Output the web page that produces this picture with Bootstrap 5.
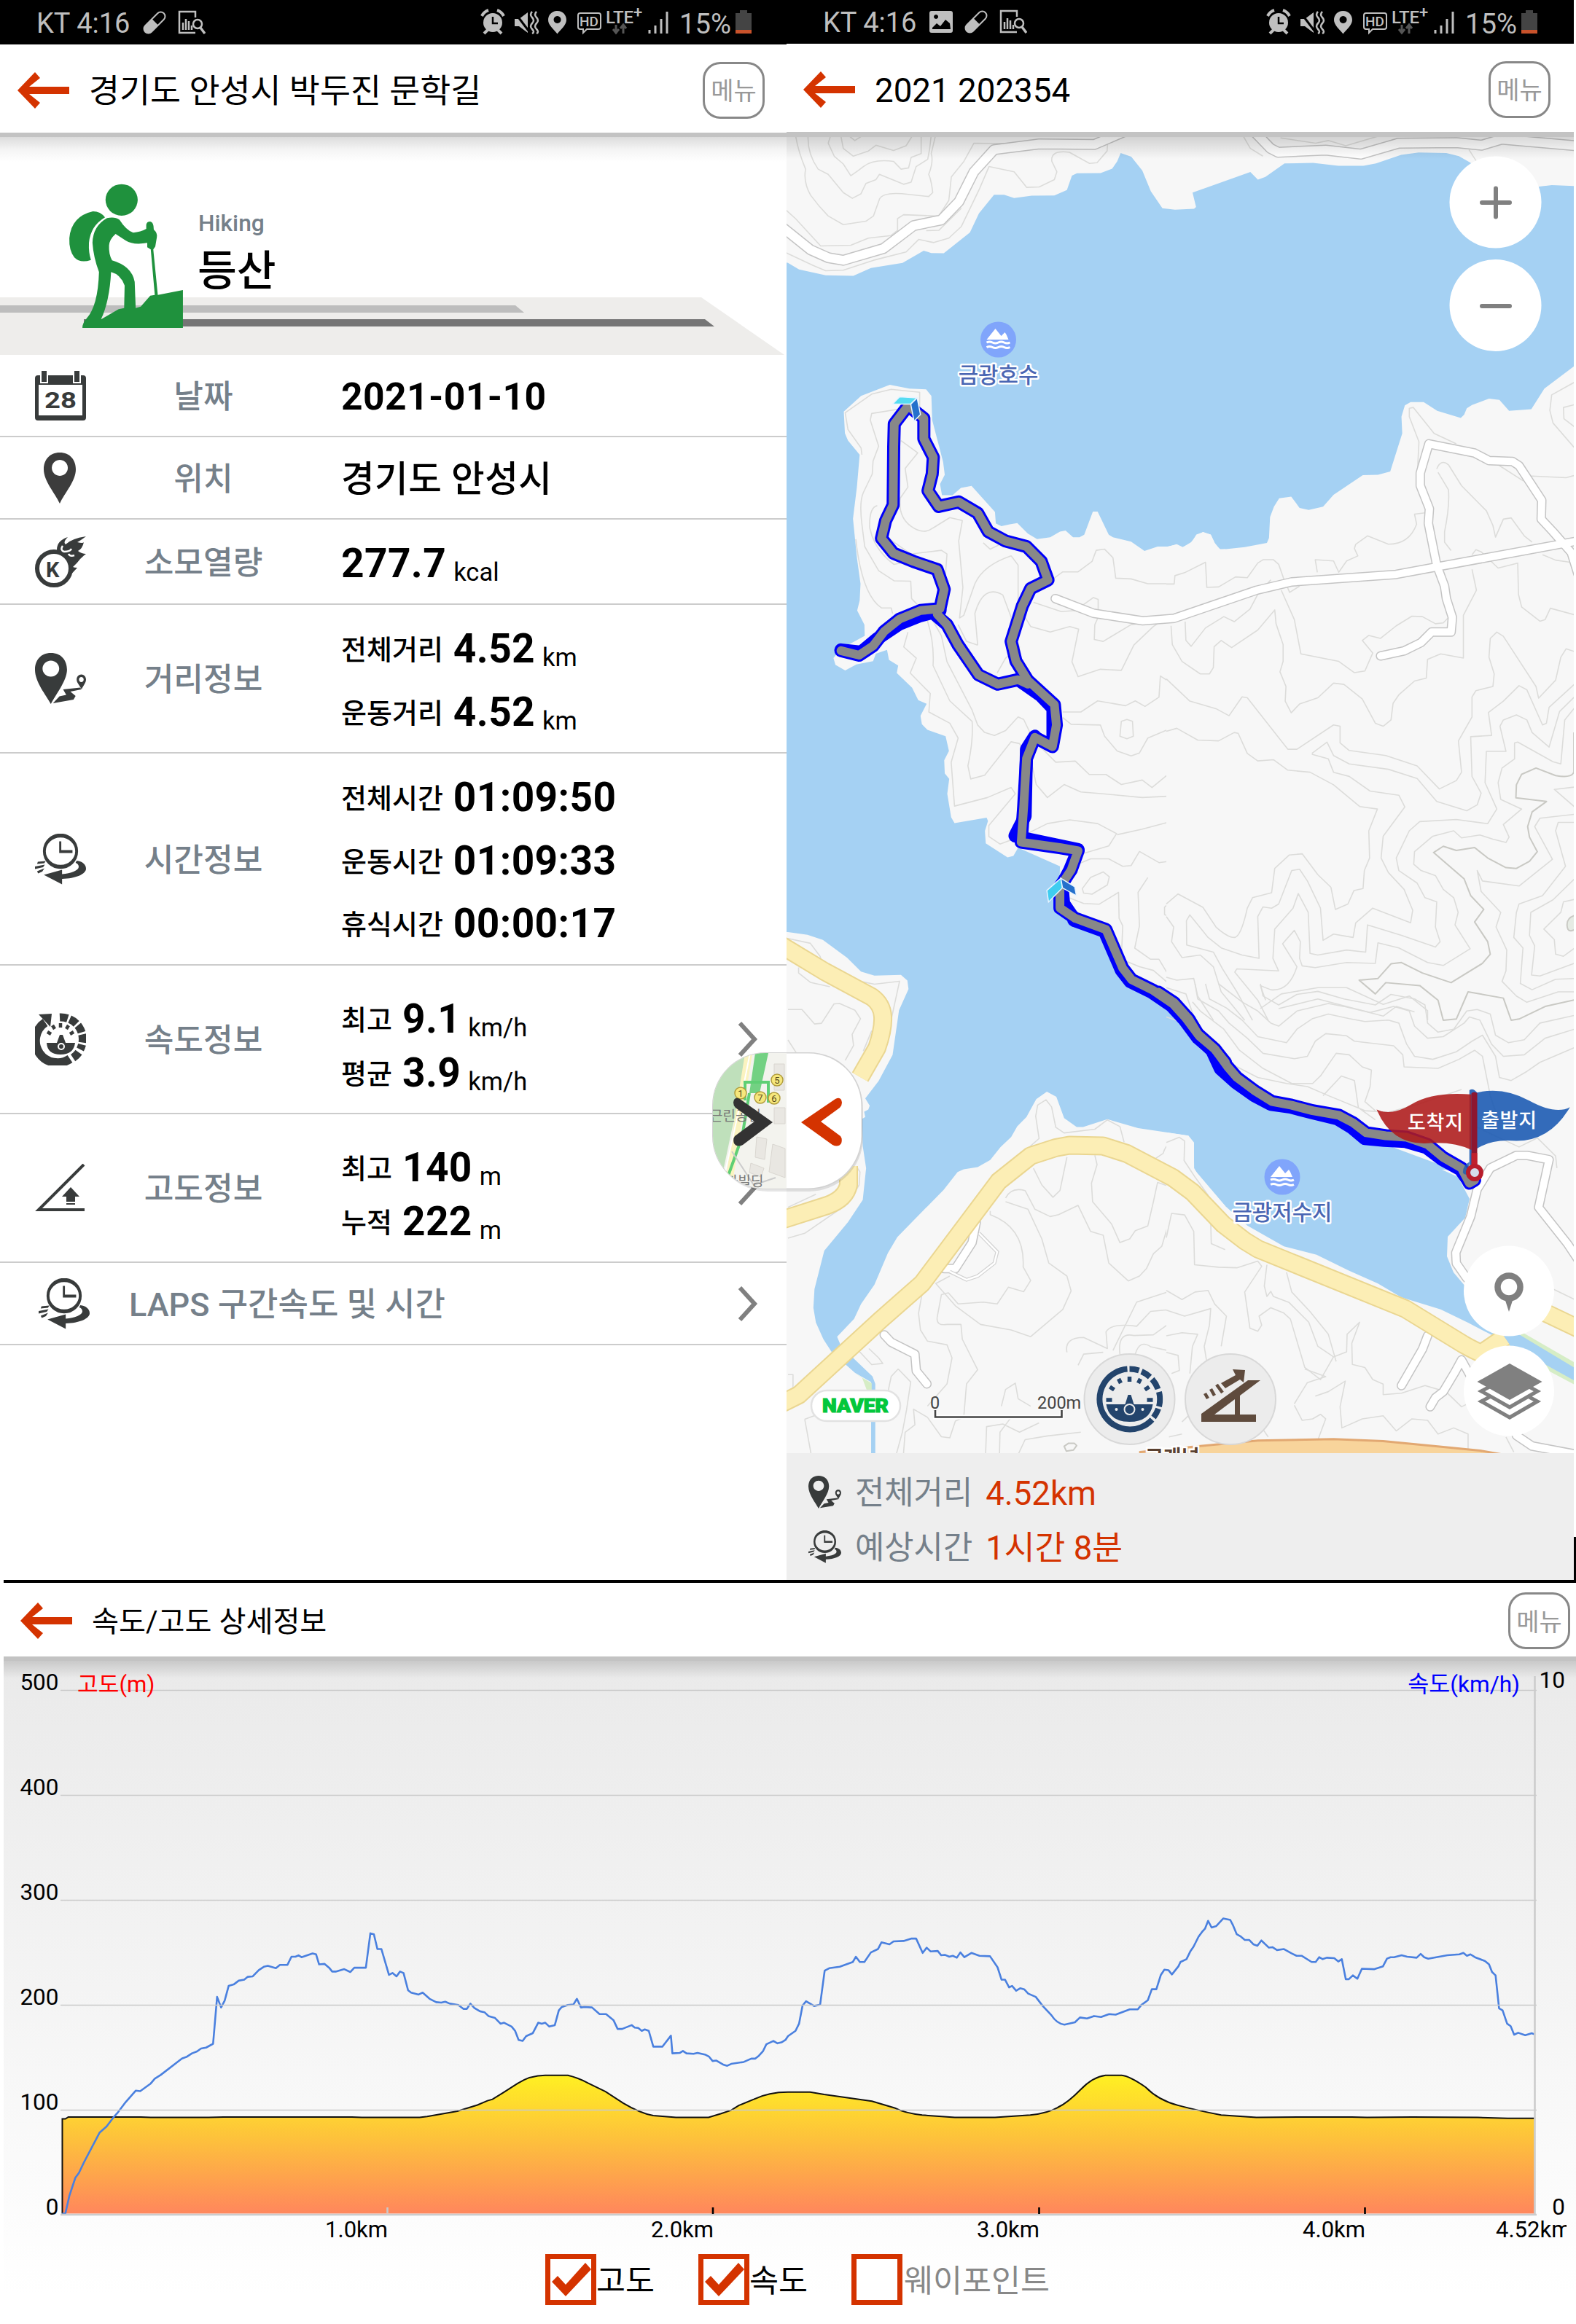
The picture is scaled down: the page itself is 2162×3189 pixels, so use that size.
<!DOCTYPE html>
<html lang="ko">
<head>
    <meta charset="UTF-8">
    <title>등산 기록</title>
    <link href="https://cdn.jsdelivr.net/npm/bootstrap@5.3.3/dist/css/bootstrap.min.css" rel="stylesheet">
    <style>
        body { width: 2162px; background: #fff; color: #000; font-family: Roboto, "Noto Sans CJK KR", sans-serif; overflow-x: hidden; }
        svg { display: block; flex: none; }
        .screens { height: 2168px; }
        .screen { width: 1079px; height: 2168px; overflow: hidden; }
        .screen-map { width: 1080px; }
        .statusbar { height: 61px; background: #000; color: #bfbfbf; font-size: 38px; padding-left: 50px; }
        .statusbar span { padding-top: 3px; }
        .topbar { height: 121px; padding: 4px 30px 0 24px; font-size: 45.7px; }
        .topbar .title-text { margin-left: 27px; line-height: 60px; padding-top: 4px; }
        .btn-menu { width: 85px; height: 78px; border: 3px solid #888; border-radius: 24px; color: #999; font-size: 34px; padding: 3px 0 0; line-height: 1; background: #fff; }
        .bar-line { height: 6px; background: #c3c3c3; }
        .bar-shadow { height: 34px; background: linear-gradient(#dcdcdc, #f4f4f4 50%, #fff); }
        .hero { height: 265px; }
        .item { border-bottom: 2px solid #ccc; }
        .item-icon { width: 70px; margin-left: 48px; }
        .item-label { width: 322px; padding-top: 5px; text-align: center; font-size: 44.2px; font-weight: 500; color: #75808a; }
        .item-value { margin-left: 28px; padding-top: 5px; font-size: 55px; font-weight: 700; letter-spacing: .4px; }
        .item-value .line { display: flex; align-items: baseline; }
        .h113 { height: 113px; } .h117 { height: 117px; } .h204 { height: 204px; } .h291 { height: 291px; }
        .lh87 .line { height: 86.5px; line-height: 86.5px; }
        .lh73 { padding-top: 17px; }
        .lh73 .line { height: 74px; line-height: 74px; }
        .sub { font-size: 38px; font-weight: 500; letter-spacing: 0; margin-right: 14px; transform: translateY(-4px); }
        .unit { font-size: 34.5px; font-weight: 400; letter-spacing: 0; margin-left: 10px; transform: translateY(5px); }
        .chev { margin-left: auto; margin-right: 38px; }
        .handle { position: absolute; left: 975px; top: 1438px; z-index: 5; }
        .infobar { height: 174px; background: #eee; padding: 16px 0 0 30px; font-size: 45.5px; }
        .infobar .inforow { height: 75px; }
        .infobar span { padding-top: 5px; }
        .infobar .name { color: #75808a; font-size: 43.8px; margin-left: 19px; margin-right: 18px; }
        .orange { color: #d43300; }
        .detail { height: 1021px; margin-left: 5px; border-top: 4px solid #000; position: relative; }
        .detail .topbar { height: 101px; padding: 3px 8px 0 23px; font-size: 40.2px; }
        .chart-area { height: 916px; background: linear-gradient(#eaeaea, #f3f3f3 45%, #fff 95%); }
        .chart-shadow { height: 24px; background: linear-gradient(#c9c9c9, rgba(232,232,232,0)); margin-bottom: -24px; }
        .legend { margin-top: -36px; padding-left: 743px; font-size: 43.5px; line-height: 70px; }
        .legend span { padding-top: 3px; }
        .edge { position: absolute; right: 0; top: 2109px; width: 3px; height: 60px; background: #000; }
        .ns path, .ns polyline, .ns polygon { vector-effect: non-scaling-stroke; }
        .land { fill: #f7f7f7; }
        .contour { fill: none; stroke: #dcdcda; stroke-width: 1.6; stroke-linejoin: round; }
        .contour .bold { stroke: #c9c9c4; stroke-width: 2; }
        .rc { fill: none; stroke: #c4c4c4; stroke-width: 13; stroke-linejoin: round; stroke-linecap: round; }
        .rf { fill: none; stroke: #fff; stroke-width: 10; stroke-linejoin: round; stroke-linecap: round; }
        .yc { fill: none; stroke: #ead691; stroke-width: 26; stroke-linejoin: round; }
        .yf { fill: none; stroke: #fceeb5; stroke-width: 22; stroke-linejoin: round; }
        .tb { fill: none; stroke: #0000fa; stroke-width: 18; stroke-linejoin: round; stroke-linecap: round; }
        .tg { fill: none; stroke: #888; stroke-width: 12; stroke-linejoin: round; stroke-linecap: round; }
        .maplabel { fill: #4a66b3; stroke: #fff; stroke-width: 5; paint-order: stroke; stroke-linejoin: round; font-size: 29.8px; font-weight: 500; text-anchor: middle; }
    </style>
</head>
<body>

<svg width="0" height="0" style="position:absolute">
    <defs>
        <symbol id="ic-back" viewBox="0 0 71 50" preserveAspectRatio="none">
            <path d="M24 0l7 8-15 12h55v10H16l15 12-7 8L0 25z" fill="#d43300"/>
        </symbol>
        <symbol id="ic-route" viewBox="134 814 196 140" preserveAspectRatio="none">
            <path fill="#383b3b" fill-rule="evenodd" d="M195 814c40 0 62 20 62 46 0 30-45 70-62 94-18-24-61-60-61-94 0-26 22-46 61-46zm0 21c-18 0-32 10-32 22s14 22 32 22 32-10 32-22-14-22-32-22z"/>
            <path fill="#383b3b" d="M203 952l25-19 26-4-12-15 66-5 4 5-42 6 20 12-8 10z"/>
            <path fill="#383b3b" fill-rule="evenodd" d="M312 873c10 0 18 6 18 14 0 9-12 18-17 27-5-9-19-18-19-27 0-8 8-14 18-14zm0 7c-5 0-9 3-9 7s4 7 9 7 9-3 9-7-4-7-9-7z"/>
        </symbol>
        <symbol id="ic-clock" viewBox="134 1300 196 140" preserveAspectRatio="none">
            <g fill="none" stroke="#383b3b">
                <ellipse cx="232" cy="1348" rx="62" ry="43" stroke-width="11"/>
                <path d="M231 1321v28h47" stroke-width="8"/>
            </g>
            <path fill="#383b3b" d="M294 1374c22 2 36 10 36 22 0 15-40 27-92 28v15l-70-26 70-14v12c34-2 64-10 64-20 0-6-5-9-12-11zM145 1377l30-2-5 6-28 2zM134 1390l38-5-7 7-31 5zM142 1403l28-8-8 9-16 5z"/>
        </symbol>
        <symbol id="ic-chev" viewBox="0 0 30 50">
            <path d="M4 3l20 22L4 47" fill="none" stroke="#808080" stroke-width="6"/>
        </symbol>
        <symbol id="ic-gauge" viewBox="0 0 92 92">
            <path d="M43 4.600A41.500 41.500 0 1 0 77 74" fill="none" stroke="currentColor" stroke-width="8"/>
            <path d="M46 4.500A41.500 41.500 0 0 1 59 6.500M62.500 8A41.500 41.500 0 0 1 74 15.500M77 18.500A41.500 41.500 0 0 1 85 32M86.500 36A41.500 41.500 0 0 1 86.500 56M85.500 59A41.500 41.500 0 0 1 79 71" fill="none" stroke="currentColor" stroke-width="8"/>
            <path d="M14 53h26l4-13h4l4 13h26q-4 24-32 24T14 53z" fill="currentColor"/>
            <g stroke="currentColor" stroke-width="5.500">
                <path d="M46 15v7M31 18l3 6M61 18l-3 6M19 29l6 4M73 29l-6 4M14 47h8M70 47h8"/>
            </g>
            <circle cx="46" cy="60" r="7" fill="none" stroke="#ececec" stroke-width="2"/>
            <circle cx="28" cy="60" r="2" fill="#ececec"/><circle cx="64" cy="60" r="2" fill="#ececec"/>
        </symbol>
        <symbol id="ic-lake" viewBox="0 0 50 50">
            <circle cx="25" cy="25" r="24.500" fill="#80a5fb"/>
            <path d="M9 25L21 10l8 10 5-5 2 3 3 7z" fill="#fff"/>
            <path d="M9 29q4-2 8 0t8 0 8 0 8 0M9 35.500q4-2 8 0t8 0 8 0 8 0" fill="none" stroke="#fff" stroke-width="3"/>
        </symbol>
        <symbol id="ic-pill" viewBox="0 0 32 32">
            <g transform="rotate(45 16 16)">
                <rect x="10" y="-2" width="12" height="36" rx="6" fill="none" stroke="#bfbfbf" stroke-width="2"/>
                <path d="M10 15h12v13a6 6 0 0 1-12 0z" fill="#bfbfbf"/>
            </g>
        </symbol>
        <symbol id="ic-doc" viewBox="0 0 38 34">
            <path d="M24 31H2V2h22v8" fill="none" stroke="#bfbfbf" stroke-width="2.500"/>
            <path d="M7 27V17M11 27V12M15 27V15M19 27v-6" stroke="#bfbfbf" stroke-width="2.500"/>
            <circle cx="27" cy="19" r="6" fill="none" stroke="#bfbfbf" stroke-width="2.500"/>
            <path d="M31 24l6 8" stroke="#bfbfbf" stroke-width="3.500"/>
        </symbol>
        <symbol id="ic-photo" viewBox="0 0 32 32">
            <path fill="#bfbfbf" fill-rule="evenodd" d="M3 1h26a3 3 0 0 1 3 3v24a3 3 0 0 1-3 3H3a3 3 0 0 1-3-3V4a3 3 0 0 1 3-3zm1 25h25l-1-8-6-5-7 9-5-4-6 6zM9 6a3 3 0 1 0 .1 0z"/>
        </symbol>
        <!-- right part of the status bar -->
        <symbol id="ic-status" viewBox="655 0 380 61">
            <g fill="none" stroke="#bfbfbf">
                <circle cx="676" cy="31" r="13" fill="#bfbfbf" stroke="none"/>
                <path d="M661 22q3-6 9-8M691 22q-3-6-9-8M664 46l6-6M688 46l-6-6" stroke-width="4"/>
                <path d="M676 23v9h7" stroke="#000" stroke-width="2.500"/>
                <path d="M706 26h6l12-9v28l-12-9h-6z" fill="#bfbfbf" stroke="none"/>
                <path d="M706 17l22 29" stroke="#000" stroke-width="3"/>
                <path d="M730 16q-4 4 0 8t0 8 0 8 0 6M736 16q-4 4 0 8t0 8 0 8 0 6" stroke-width="2.500"/>
                <path d="M764.500 15c8 0 12.500 6 12.500 12.500 0 7-8 13-12.500 19-4.500-6-12.500-12-12.500-19C752 21 756.500 15 764.500 15zm0 7a5 5 0 1 0 .1 0z" fill="#bfbfbf" fill-rule="evenodd" stroke="none"/>
                <path d="M796 18h25q3 0 3 3v16q0 3-3 3h-16l-5 5v-5h-4q-3 0-3-3V21q0-3 3-3z" stroke-width="2"/>
                <path d="M891 46v-5M899 46V35M907 46V26M915 46V16" stroke-width="3"/>
            </g>
            <g fill="#bfbfbf">
                <text x="795" y="36" font-size="19" font-weight="500">HD</text>
                <text x="831" y="32" font-size="24" font-weight="500" textLength="38">LTE</text>
                <text x="869" y="24" font-size="22" font-weight="500">+</text>
                <text x="932" y="46" font-size="38" textLength="71" lengthAdjust="spacingAndGlyphs">15%</text>
            </g>
            <path d="M845 34v10M841 40l4 5 4-5M855 46V35M851 39l4-5 4 5" stroke="#555" stroke-width="3" fill="none"/>
            <path d="M1015 14h10v4h6v28h-22V18h6z" fill="#444"/>
            <path d="M1009 41h22v5h-22z" fill="#c8522b"/>
        </symbol>
    </defs>
</svg>

<div class="screens d-flex position-relative">

    <!-- summary screen -->
    <div class="screen">
        <div class="statusbar d-flex align-items-center">
            <span>KT 4:16</span>
            <svg style="margin-left:18px" width="32" height="32"><use href="#ic-pill"/></svg>
            <svg style="margin-left:16px" width="38" height="34"><use href="#ic-doc"/></svg>
            <svg class="ms-auto" style="margin-right:44px" width="380" height="61"><use href="#ic-status"/></svg>
        </div>
        <div class="topbar d-flex align-items-center">
            <svg width="71" height="50"><use href="#ic-back"/></svg>
            <span class="title-text">경기도 안성시 박두진 문학길</span>
            <button class="btn-menu ms-auto">메뉴</button>
        </div>
        <div class="bar-line"></div>
        <div class="bar-shadow"></div>
        <div class="hero">
            <svg width="1079" height="265" viewBox="0 222 1079 265">
                <path d="M0 408h962l114 79H0z" fill="#eeedeb"/>
                <path d="M0 419h707l12 10H0z" fill="#bdbdbd"/>
                <path d="M115 438h852l13 10H115z" fill="#757575"/>
                <g transform="scale(.6894 .33333)" fill="#1f913d">
                    <ellipse cx="242" cy="823" rx="32" ry="65"/>
                    <path d="M185 870Q200 870 209 895Q180 930 177 1000Q176 1040 181 1070Q160 1085 148 1060Q137 1030 138 980Q142 890 185 870z"/>
                    <path d="M213 898Q228 890 238 905Q250 945 265 958Q280 955 291 942V925Q292 912 299 912Q306 914 306 945Q314 960 312 978L309 1015L305 1027L314 1214L364 1194V1350H164Q164 1330 172 1312Q195 1260 197 1120Q186 1060 184 1000Q185 930 213 898zM230 963Q218 985 217 1010Q216 1045 223 1072Q262 1095 268 1160L270 1268L280 1262L299 1217L308 1214L300 1027L293 1018V1000Q265 1010 250 990zM221 1120Q218 1240 201 1315L236 1273L247 1268L248 1175Q240 1130 221 1120z" fill-rule="evenodd"/>
                </g>
                <text x="272" y="316.500" font-size="31.700" font-weight="500" fill="#75808a">Hiking</text>
                <text x="271" y="391.500" font-size="58.500" font-weight="500">등산</text>
            </svg>
        </div>

        <div class="item h113 d-flex align-items-center">
            <svg class="item-icon" height="70" viewBox="0 0 70 70">
                <path d="M4 7h62q4 0 4 4v54q0 4-4 4H4q-4 0-4-4V11q0-4 4-4zm1 13v42h60V20z" fill="#383b3b" fill-rule="evenodd"/>
                <path d="M8 0h9v17H8zM53 0h9v17h-9z" fill="#383b3b" stroke="#fff" stroke-width="2"/>
                <text x="35" y="52" font-size="31" font-weight="700" text-anchor="middle" textLength="44" lengthAdjust="spacingAndGlyphs" fill="#383b3b">28</text>
            </svg>
            <div class="item-label">날짜</div>
            <div class="item-value" style="font-size:51.600px">2021-01-10</div>
        </div>
        <div class="item h113 d-flex align-items-center">
            <svg class="item-icon" height="70" viewBox="0 0 70 70">
                <path d="M34 0c14 0 22 10 22 23 0 16-15 32-22 47-7-15-22-31-22-47C12 10 20 0 34 0zm0 10a11 11 0 1 0 .1 0z" fill="#3c3c3c" fill-rule="evenodd"/>
            </svg>
            <div class="item-label">위치</div>
            <div class="item-value" style="font-size:49.700px;font-weight:500">경기도 안성시</div>
        </div>
        <div class="item h117 d-flex align-items-center">
            <svg class="item-icon" height="70" viewBox="0 0 70 70">
                <circle cx="26" cy="44" r="23" fill="none" stroke="#383b3b" stroke-width="6"/>
                <path d="M30 18Q30 6 45 1Q38 8 42 11Q50 3 70 0Q62 6 58 8Q66 10 67 8Q65 17 59 20Q64 24 70 24Q62 30 58 36L52 42Q54 43 58 43Q52 50 46 55L48 36Q42 24 32 24z" fill="#383b3b"/>
                <path d="M38 13q-4 6 2 8 8 0 10-4M46 24q2 4 8 2" fill="none" stroke="#fff" stroke-width="2.500"/>
                <text x="15" y="56" font-size="29" font-weight="700" fill="#383b3b">K</text>
            </svg>
            <div class="item-label">소모열량</div>
            <div class="item-value"><div class="line">277.7<span class="unit">kcal</span></div></div>
        </div>
        <div class="item h204 d-flex align-items-center">
            <svg class="item-icon" height="70"><use href="#ic-route"/></svg>
            <div class="item-label">거리정보</div>
            <div class="item-value lh87">
                <div class="line"><span class="sub">전체거리</span>4.52<span class="unit">km</span></div>
                <div class="line"><span class="sub">운동거리</span>4.52<span class="unit">km</span></div>
            </div>
        </div>
        <div class="item h291 d-flex align-items-center">
            <svg class="item-icon" height="70"><use href="#ic-clock"/></svg>
            <div class="item-label">시간정보</div>
            <div class="item-value lh87">
                <div class="line"><span class="sub">전체시간</span>01:09:50</div>
                <div class="line"><span class="sub">운동시간</span>01:09:33</div>
                <div class="line"><span class="sub">휴식시간</span>00:00:17</div>
            </div>
        </div>
        <div class="item h204 d-flex align-items-center">
            <svg class="item-icon" height="72" viewBox="0 0 70 72" color="#383b3b">
                <path d="M14 13A29 29 0 1 0 48 63" fill="none" stroke="#383b3b" stroke-width="12"/>
                <path d="M5 2l18-1-2 18z" fill="#383b3b"/>
                <path d="M34 6a30 30 0 0 1 28 44M60 54a30 30 0 0 1-10 9" fill="none" stroke="#383b3b" stroke-width="11" stroke-dasharray="11 3"/>
                <path d="M16 41h14l4-11h4l4 11h13q-2 16-20 16t-19-16z" fill="#383b3b"/>
                <path d="M35 14v6M24 17l3 5M46 17l-3 5M17 26l5 3M53 26l-5 3" stroke="#383b3b" stroke-width="4.500"/>
                <circle cx="36" cy="46" r="4" fill="none" stroke="#fff" stroke-width="2"/>
            </svg>
            <div class="item-label">속도정보</div>
            <div class="item-value lh73">
                <div class="line"><span class="sub">최고</span>9.1<span class="unit">km/h</span></div>
                <div class="line"><span class="sub">평균</span>3.9<span class="unit">km/h</span></div>
            </div>
            <svg class="chev" width="30" height="50"><use href="#ic-chev"/></svg>
        </div>
        <div class="item h204 d-flex align-items-center">
            <svg class="item-icon" height="66" viewBox="0 0 70 66">
                <path d="M67 1L5 63h63" fill="none" stroke="#383b3b" stroke-width="4"/>
                <path d="M49 32l12 13h-6v7H43v-7h-6zM43 54h12v2H43z" fill="#383b3b"/>
            </svg>
            <div class="item-label">고도정보</div>
            <div class="item-value lh73">
                <div class="line"><span class="sub">최고</span>140<span class="unit">m</span></div>
                <div class="line"><span class="sub">누적</span>222<span class="unit">m</span></div>
            </div>
            <svg class="chev" width="30" height="50"><use href="#ic-chev"/></svg>
        </div>
        <div class="item h113 d-flex align-items-center">
            <svg class="item-icon" style="margin-left:53px" height="70"><use href="#ic-clock"/></svg>
            <div class="item-label text-start w-auto" style="margin-left:54px;font-size:45px">LAPS 구간속도 및 시간</div>
            <svg class="chev" width="30" height="50"><use href="#ic-chev"/></svg>
        </div>
    </div>

    <!-- map screen -->
    <div class="screen screen-map">
        <div class="statusbar d-flex align-items-center" style="height:60px">
            <span style="padding-top:2px">KT 4:16</span>
            <svg style="margin-left:18px" width="32" height="32"><use href="#ic-photo"/></svg>
            <svg style="margin-left:16px" width="32" height="32"><use href="#ic-pill"/></svg>
            <svg style="margin-left:16px" width="38" height="34"><use href="#ic-doc"/></svg>
            <svg class="ms-auto" style="margin-right:46px" width="380" height="61"><use href="#ic-status"/></svg>
        </div>
        <div class="topbar d-flex align-items-center" style="padding:4px 32px 0 23px">
            <svg width="71" height="50"><use href="#ic-back"/></svg>
            <span class="title-text">2021 202354</span>
            <button class="btn-menu ms-auto">메뉴</button>
        </div>
        <div class="bar-line" style="height:7px"></div>
        <svg width="1080" height="1806" viewBox="1079 188 1080 1806" class="ns">
            <defs>
                <linearGradient id="mapShade" x1="0" y1="0" x2="0" y2="1">
                    <stop offset="0" stop-color="#000" stop-opacity=".15"/><stop offset="1" stop-color="#000" stop-opacity="0"/>
                </linearGradient>
            </defs>
            <rect x="1079" y="188" width="1081" height="1806" fill="#a5d1f3"/>

            <!-- north shore -->
            <g transform="translate(1081 0) scale(.6894 .35714)">
                <path class="land" d="M-10 500H1568V715L1520 711L1495 717L1440 760L1400 720L1358 625L1335 600L1310 588L1255 586L1220 595L1170 628L1145 637H1095L1045 626L988 628L950 680L935 690L920 661L805 740L812 795L808 802L770 806L745 800L722 735L705 655L683 602L662 588L655 620L645 648L622 665L575 666L565 675L555 730L530 751L485 752L450 761L430 748H410L380 820L362 893L310 973L285 972L270 963L228 1010L165 1030L130 1060L75 1058L22 1035L0 1010L-10 1005z"/>
                <g class="contour">
                    <path d="M15 520Q20 580 35 650Q30 700 45 750Q60 790 80 830L110 863L155 850L170 830L182 765Q190 735 240 747L280 755L288 740Q285 690 280 670Q290 620 285 590L293 525"/>
                    <path d="M40 520Q38 590 60 650L80 670L110 740L128 762L145 745L155 705L175 690L182 670L230 708L245 700L255 640L278 612L282 570L285 520"/>
                    <path d="M85 520L80 550L92 600L110 630L125 675L140 655L150 640Q170 610 210 620L225 650L240 645L245 605L265 590V520M120 520L133 540L145 525M105 520L110 570L130 600L160 580L175 558L210 578L235 560L248 520"/>
                    <path d="M-5 805L15 840L65 945L125 942L160 915L205 905L218 885V840L230 825L300 830L320 770L325 680L350 620L370 550L450 552"/>
                    <path d="M-5 970L50 1020L75 1040L110 1038L170 1000L235 968L260 920L290 932L320 915L345 870L380 730L400 640L450 660L475 720L500 718L530 690L535 660L525 620Q522 575 560 585L600 628L615 625L635 580L637 520"/>
                    <path d="M905 520L920 570L945 600M980 530L1050 550L1075 540L1110 560L1180 520M1355 575L1370 620M275 886L300 885L345 800"/>
                </g>
                <path class="rc" style="stroke-width:15" d="M-10 875L45 960L80 990L110 1000L190 955L250 867L305 845L340 775L370 660L410 575L500 553L610 555L670 505M925 500L960 570L975 585L1070 577L1140 592L1215 550L1330 548L1380 558L1420 535L1580 562"/>
                <path class="rf" style="stroke-width:12" d="M-10 875L45 960L80 990L110 1000L190 955L250 867L305 845L340 775L370 660L410 575L500 553L610 555L670 505M925 500L960 570L975 585L1070 577L1140 592L1215 550L1330 548L1380 558L1420 535L1580 562"/>
            </g>

            <!-- peninsula -->
            <g transform="translate(1081 500) scale(.38265 .5102)">
                <path class="land" d="M1568 497L1548 497L1530 480L1516 458L1488 451L1465 460L1445 478L1415 492L1390 485L1360 490H1325L1278 502L1230 477L1165 465L1150 458L1110 396H1093L1062 458L1045 465H1022L995 447L975 450L940 465L893 470L860 455L822 427L795 430L765 435L745 428L742 397L658 327L620 332L590 352H552L545 322L562 297L556 262L517 150L514 85L495 67L435 65L365 55L262 85L200 127L204 185L215 205L257 243L247 330L233 415L247 520L260 590L257 635L248 662L274 700L275 730L190 765L163 790L170 808L205 823L245 807L305 798L315 778L355 768L362 795L395 810L390 830L445 870L467 903L497 913L475 945L480 968L500 983L565 1000L577 1040L560 1065L562 1100L578 1115L571 1155L585 1218L597 1234L712 1219L717 1228L706 1255L709 1288L787 1326L808 1322L825 1300L975 1350L970 1462L1130 1515L1200 1640L1310 1692L1380 1725L1568 1890z"/>
                <g class="contour">
                    <path d="M472 130V75L370 67L300 80L205 130L215 175L262 225L265 243M400 120L300 132L295 150L325 220L305 260L302 295L270 345Q255 370 265 430L275 490L325 555L380 582L440 583L443 630L520 690L550 730L570 800L660 930L680 970L705 990L740 998L780 985L825 948L845 955L880 1010L960 1070L1030 1067L1080 1103L1140 1103L1195 1130L1270 1118L1305 1138L1375 1095L1430 1118L1568 1150"/>
                    <path d="M405 205L465 238L420 280L430 330L402 360Q395 410 440 435T520 440L580 412L625 420L612 475L627 600L615 682L630 675L670 590Q700 540 800 515L825 540V650L870 705L940 720L1010 705L1042 712L1018 800L1040 840L1120 820L1195 823L1240 755L1310 705L1390 665L1460 655L1568 680"/>
                    <path d="M243 470Q265 620 335 655H370L375 670M320 380Q290 385 293 440Q310 500 380 538L430 530M345 460L440 510L550 500L570 510L560 610M680 755L640 745L610 700M680 755L670 670Q700 590 770 620L800 680V720L830 760L780 790L750 830M430 720L415 760L460 790L438 830L510 885L505 935L580 965L610 1005L585 1070L597 1188L715 1165L800 1138L815 1155L720 1240V1270L760 1290L850 1265L930 1235L1010 1225L1110 1235L1178 1262L1150 1295L1060 1315M500 690Q525 750 520 810L580 905L660 960Q665 1010 645 1080L655 1115L705 1105L800 1015L830 1020L870 1060L890 1130L930 1165L990 1130L1050 1150L1130 1155L1270 1165L1400 1160L1465 1178L1420 1220L1270 1250L1180 1265"/>
                    <path d="M700 480L725 497L800 470M880 640L980 665L1030 662L1095 627L1112 632V680L1100 700L1098 740L1130 745L1230 700L1330 690M945 580L985 558L1040 558L1090 530L1105 500L1135 497L1165 520L1175 575L1230 577L1290 590L1385 590L1392 565L1430 563L1495 533L1500 540L1495 600L1568 592M985 935L1050 935L1110 905L1210 918L1245 905L1280 920L1330 895L1335 838L1380 860L1470 915L1568 940M985 950L1015 968L1120 970L1135 1000L1180 1040L1230 1053L1260 1045L1290 1005L1400 970L1470 985L1568 1015M1195 960L1190 1000L1215 1007L1238 1000L1235 960L1215 955zM1378 908L1377 922L1392 926V910zM1430 700V750L1455 758L1510 700L1568 680"/>
                    <path d="M1055 1410L1085 1380L1130 1365L1152 1378L1145 1400L1090 1425L1060 1422zM1020 1350L1085 1330H1150L1200 1350L1230 1348L1260 1310L1330 1340L1430 1330L1568 1315M1010 1435L1060 1450L1115 1452L1185 1420L1187 1490L1200 1510L1195 1600L1260 1620L1310 1630L1400 1688L1450 1690L1465 1730L1568 1790M1290 1380L1255 1420L1260 1510L1243 1570L1300 1600L1330 1600L1370 1650L1450 1650L1475 1690L1568 1735M1568 1450L1500 1450L1450 1430L1400 1425L1350 1460L1350 1480L1410 1500L1380 1530L1382 1570L1420 1595L1490 1588L1530 1610L1568 1680M1568 1565L1520 1560L1440 1485L1428 1500V1560L1450 1565"/>
                </g>
            </g>

            <!-- east side -->
            <g transform="translate(1600 500) scale(.3584 .574)">
                <path class="land" d="M0 437L40 430L63 437L95 427L115 407L140 401L170 407L188 432L208 443L300 437L385 427L393 415L397 365L412 340L432 320L478 316L510 343L545 348L600 340L640 312L752 265L810 264L857 256L903 165L900 125L913 98L935 90H985L1037 111L1127 128L1140 120L1150 105L1170 97L1235 82L1275 85L1312 111L1397 107L1447 58L1570 0V1951H1150L1046 1913L865 1871L642 1810L402 1770L300 1720L130 1590L0 1520z"/>
                <g class="contour">
                    <path d="M960 270L967 185L930 125V105L945 103L1025 165L1110 190M1270 240L1365 278L1400 267L1530 271L1570 264M1570 40L1475 73L1468 110L1480 140L1570 205M1570 95L1520 103L1522 130L1570 153M990 355L950 358L958 382Q930 430 850 430L770 410L725 430L720 440L733 458L690 470L660 497L640 470L570 467L578 497M1035 250Q1050 225 1080 240L1130 290L1225 350L1250 385L1260 413L1290 370L1320 367L1370 410L1400 425M1040 258L1080 300Q1085 340 1065 400V425L1090 445M1170 455L1185 443L1205 448L1270 487L1345 475L1348 550L1360 580L1430 614L1450 610L1470 583L1570 600M1440 455L1490 468L1545 473"/>
                    <path d="M0 525H30L33 505L70 498L150 473L155 533L200 532L265 508L310 510L350 475L370 467H410L430 478L448 510L472 545L510 530M400 515L350 550L320 585L260 615L220 603L150 630L95 674L75 660L72 615M18 625L23 670L60 710L130 740L165 740L180 725L183 675L210 660L250 677L350 635L415 587L420 620L447 670V710L435 735L458 770L455 805L478 833L510 812L580 797L640 762L680 765L750 800L800 858L830 865L860 850L868 810L890 790L950 757L995 750L1000 705L1050 692L1137 702V600L1187 540L1170 490M440 540L490 610L515 692L660 710L720 737L760 733L790 690L750 660L775 648L820 655L880 625L940 602L980 603L1030 620L1060 618L1080 605"/>
                    <path d="M0 752L90 805L190 823L240 840L290 795L310 797L465 920L500 920L640 862L665 865V905L700 923L840 935L960 960L1045 1015L1110 995L1130 975L1118 900L1170 843L1170 795L1185 780L1250 770L1255 740L1235 700L1240 655L1265 640L1290 650L1415 770L1425 798L1490 755L1510 700L1530 680L1570 688M0 877L40 870L120 898L200 900L260 880L275 882L310 930L350 948L410 945L465 970L550 975L640 1005L740 1057L808 1063L775 1115L778 1180L758 1210L753 1253L718 1258L695 1290L647 1303L630 1250L580 1220L520 1170L470 1173L415 1205L403 1263L330 1275L310 1300Q285 1370 260 1370T190 1345L140 1298L45 1266L0 1290"/>
                    <path d="M557 930L615 903L640 935L700 955L850 968L960 990L1035 1045L1150 1067L1190 1053L1205 1025L1170 985L1165 890L1245 887L1233 832L1290 805L1350 768L1380 778L1440 862L1455 858L1465 820L1570 760M557 932L620 943L640 975L700 985L780 1020L890 1030L913 1058L830 1128L822 1180L850 1215L910 1255L943 1305L935 1335L790 1300L725 1335L715 1370L640 1362L600 1377L590 1300L540 1235L510 1207L480 1210L430 1290L403 1300L370 1297L350 1320L355 1420L290 1412L210 1395L160 1370L90 1316L77 1330L78 1388L180 1405L215 1445L270 1500L330 1568"/>
                    <path d="M1570 790L1505 830L1465 915L1400 880L1380 850L1340 838L1290 850L1277 865L1300 925L1225 925L1220 1000L1265 1063L1230 1098L1110 1088L970 1093L930 1115L880 1180L890 1210L960 1240L990 1275L1035 1285L1030 1345L1048 1380L1030 1393L900 1365L770 1340L763 1405L690 1400L580 1412L550 1408L543 1310L505 1265L485 1300L415 1350L408 1420L430 1450L270 1445L262 1453L350 1520L390 1568M1570 815L1525 850L1510 955L1480 950L1345 903L1333 905V943L1285 965L1270 1000L1280 1040L1360 1063L1290 1100L1312 1130L1300 1143L1250 1135L1200 1125L1130 1132L1100 1115L1020 1128L950 1165L947 1195L975 1210L1030 1222L1060 1255L1100 1275L1117 1310L1105 1340L1163 1397L1060 1437L1000 1430L890 1395L810 1383L800 1432L690 1430L570 1442L520 1438L510 1420L513 1380L490 1353L445 1385L500 1440Q470 1500 400 1495L360 1485L380 1520"/>
                    <path class="bold" d="M1560 880V975Q1550 990 1490 983L1415 965L1360 980L1340 1005L1338 1036L1455 1045L1400 1070L1383 1105L1390 1130L1420 1165L1390 1188L1340 1205L1300 1203L1230 1180L1180 1155L1110 1162L1060 1152L1023 1167L1060 1187L1140 1230L1165 1270L1215 1303L1180 1333L1230 1380L1240 1410L1210 1432L1090 1478L980 1455L900 1430L860 1433L810 1468L738 1472L800 1505L840 1478L970 1485L1040 1520L1060 1568L1110 1565L1155 1500L1290 1515L1320 1568L1350 1565L1450 1535L1570 1518"/>
                    <path d="M1570 1075L1430 1085L1410 1105L1478 1183L1350 1247L1210 1235L1190 1210L1205 1260L1280 1310L1262 1345L1303 1400L1300 1450L1285 1475L1340 1510L1380 1525L1500 1500L1570 1500M1570 1095H1500L1490 1115L1528 1200L1440 1270L1350 1290L1340 1310L1330 1370L1365 1395L1355 1480L1400 1495L1490 1470L1570 1468M1570 1225L1480 1280L1395 1310L1390 1365L1410 1390L1398 1460L1430 1462L1570 1430M1570 1010L1485 1016L1570 1062M1570 1278L1520 1285L1510 1310L1445 1350L1485 1375L1490 1410L1520 1415L1570 1392"/>
                    <path d="M0 1320L28 1345L20 1380L60 1418L130 1412L180 1440L210 1500L300 1568M0 1465L40 1472L105 1468L120 1510L180 1568M0 1490L75 1505L110 1568M360 1540L440 1505L580 1490L690 1490L830 1530L930 1510L1000 1545V1568M430 1540L580 1517L750 1545L830 1558L880 1535L950 1548"/>
                </g>
                <path d="M1570 1316q-35 5-36 22t16 16l20-4z" fill="#e6ebe4" stroke="#c9c9c4" stroke-width="2"/>
                <path class="rc" d="M-425 560L-279 595L-90 613L30 607L345 540L480 520L880 502L1575 422M820 697L910 685L975 665L1015 640H1090L1095 605L1072 560L1065 530L1035 480L1003 380L1007 345L972 290V260L1005 190L1180 212L1235 230L1325 232L1350 242L1437 325L1435 370L1480 400L1550 450L1575 500"/>
                <path class="rf" d="M-425 560L-279 595L-90 613L30 607L345 540L480 520L880 502L1575 422M820 697L910 685L975 665L1015 640H1090L1095 605L1072 560L1065 530L1035 480L1003 380L1007 345L972 290V260L1005 190L1180 212L1235 230L1325 232L1350 242L1437 325L1435 370L1480 400L1550 450L1575 500"/>
            </g>

            <!-- water in front of the dam -->
            <path d="M1500 1270L1560 1345L1640 1395L1660 1440L1700 1480L1744 1516L1830 1539L1910 1574L1938 1588L1975 1598L2000 1607L2010 1632L2016 1645L2010 1671L1986 1697L1985 1724L1994 1746L2010 1765L2058 1790V1840L1900 1850L1500 1700z" fill="#a5d1f3"/>
            <path class="land" d="M1978 1605l22 10 16 30-6 26-24 26-1 27 9 22 16 19 60 20 90 60V1610z"/>

            <!-- south-west -->
            <g transform="translate(1081 1200) scale(.38265 .5102)">
                <path class="land" d="M-10 155H0L70 162L125 176L212 224L262 261L310 272L405 270L428 285L432 308L398 365L375 485L325 555L277 602L293 622L288 632L273 638L277 652L266 657L268 730L280 790L268 875L215 935L130 1012L95 1115L91 1165L100 1205L127 1250L157 1285L240 1340L298 1365V1568H-10z"/>
                <path class="land" d="M240 1305L190 1268L176 1243L237 1195L262 1155L310 1103L358 1018L392 975L558 848L608 800L630 793L680 787L725 768L762 733L800 706L822 677L855 652L890 604L928 584L962 598L990 655L1035 679H1058L1145 658L1255 682L1435 702L1455 723L1456 793L1568 892V1568H313V1370L303 1350z"/>
                <path d="M240 1342L265 1352L285 1392H300V1368z" fill="#d6edc6"/>
                <g class="contour">
                    <path d="M0 172L80 185L115 220L130 255L230 283L310 295L400 287L370 390M38 250V265L80 290L150 302M0 363H50L95 402L120 400L165 348L185 347L240 365L260 388L230 430L235 460L205 500M300 420L270 475M0 895L100 860M0 978L60 965L215 885L255 835L258 800L245 785M0 445L30 480"/>
                    <path d="M780 790L840 750L900 710L888 650L895 620L925 606L945 625L960 680L990 695L1100 685L1145 660L1190 678L1205 720M880 790L910 835L950 868L975 850L1000 760M1100 755L1108 780L1088 830L1092 880L1160 940L1190 990L1225 980L1245 958L1290 945L1310 880L1325 828L1370 840M1315 765L1345 750Q1360 710 1420 710L1418 770L1500 840M780 870Q800 840 850 850L885 900L940 920L970 915L1040 890L1085 960L1130 970L1150 1045L1220 1093L1260 1080L1285 1060L1310 1020L1340 1000L1375 912L1415 915L1455 960V1045L1568 1057M780 880L860 900L910 980L935 1045L1000 1080L1015 1120L985 1170L870 1243L800 1225L690 1210L600 1160L530 1100L580 1080M535 1190L550 1130L575 1125L610 1155L700 1150L750 1155L790 1110L845 1122L870 1092L843 1055Q850 950 725 915V905"/>
                    <path d="M535 1190Q530 1215 570 1210H620L625 1250L680 1332L640 1370L630 1460L600 1470L580 1515L550 1512L500 1460L450 1438L455 1480L420 1500L413 1568M480 1130L468 1180L475 1225L500 1255L570 1265L588 1300L570 1370L500 1430M240 1270L300 1318L340 1315L325 1300L290 1275M395 1330L440 1365L425 1440L410 1500L385 1568M395 1330L370 1350L345 1440M60 1465L85 1568M60 1465L150 1440M0 1345H18V1385M765 1430L780 1385L815 1368L825 1410L870 1430M708 1568L712 1485L770 1478L830 1500L900 1475M758 1568L760 1500L800 1460M820 1568L850 1520L930 1510L1050 1500M1000 1285Q990 1245 1060 1245L1145 1275L1140 1230Q1160 1205 1250 1215L1300 1175L1370 1170L1400 1190L1470 1175L1515 1190L1510 1568M1190 1290Q1180 1230 1240 1240L1310 1238L1390 1195M1040 1320L1060 1290L1130 1285M1245 1290Q1260 1250 1300 1270L1390 1285L1400 1310M1165 1280L1250 1150L1380 1118L1420 1143L1500 1125L1568 1150"/>
                    <path class="bold" d="M990 1538l15-8h22l8 6-12 12-25 3z"/>
                </g>
                <path class="rc" d="M345 1238L370 1258L455 1290L460 1335L498 1370M675 935L660 990L600 1060H560"/>
                <path class="rf" d="M345 1238L370 1258L455 1290L460 1335L498 1370M675 935L660 990L600 1060H560"/>
                <path d="M685 965L750 1015L740 1045L680 1080L640 1090L580 1068" fill="none" stroke="#d2d2d2" stroke-width="5"/>
                <path d="M685 965L750 1015L740 1045L680 1080L640 1090L580 1068" fill="none" stroke="#fff" stroke-width="2.500"/>
            </g>

            <!-- south-east -->
            <g transform="translate(1600 1350) scale(.3584 .41454)">
                <path class="land" d="M0 492L85 503L106 525V610L120 630L225 735L310 800L450 869L575 897L700 950L810 992L900 1038L1050 1078L1155 1122L1254 1166L1345 1158L1140 1000L1580 900V1568H0z"/>
                <path d="M1300 1200L1365 1155L1580 1262V1335L1460 1280z" fill="#d6edc6"/>
                <path d="M1240 1168L1345 1158L1580 1280V1322L1440 1255L1310 1195z" fill="#a5d1f3"/>
                <g class="contour">
                    <path d="M0 525L50 508L70 520L68 585L110 640L160 700M0 840L20 760L70 765L105 820L108 930L200 938L270 940L350 918L365 935L300 1020L320 1140L350 1150L365 1130L355 1100L400 1072L450 1090L475 1110L530 1270L590 1310L640 1235L690 1218L692 1160L740 1120L710 1190L712 1260L760 1270L790 1310L830 1325L830 1360L900 1355L990 1330L1070 1350L1130 1400L1200 1370L1240 1400"/>
                    <path d="M170 790L172 860L225 880M385 930L375 1000L385 1035L400 1018L410 1035L470 1055L545 1120L580 1200L640 1235M460 955L480 1020L550 1085L620 1160L650 1250M0 1015L60 1045L110 1020L160 1015L185 1060L230 1100L210 1200M0 1080L70 1100L170 1075L165 1130L145 1200L160 1280M0 1165L60 1155L120 1160L100 1200L90 1290M0 1220L45 1230L50 1280L20 1290M490 1390L540 1320L610 1300L530 1275M570 1365L620 1350L685 1315L665 1400L672 1470L750 1440L830 1430L880 1480L940 1440L1000 1445L1040 1490L1100 1470L1155 1490V1540M490 1395L520 1445L560 1440L590 1425L610 1440L580 1510M390 1500L350 1450L340 1500M60 1450L120 1400M10 1500L60 1490"/>
                    <path d="M110 0L120 50L200 90L240 130L310 180L370 230L490 248L540 240L570 190L610 165L690 172L720 190L870 205L905 235L910 275L1040 280L1120 250L1180 220L1210 240L1240 370M150 0L165 50L230 80L290 120L350 175L460 195L500 150L560 115L620 100L700 115L760 125L850 120L890 130L920 200L950 240L1020 250L1110 225L1170 190L1210 170L1260 240L1275 310L1320 320L1380 290L1430 260L1570 208M200 0L290 60L350 90L400 130L430 140L500 90L620 65L680 75L780 95L870 75L930 90L950 140L1000 180L1060 175L1140 130L1160 110L1200 120L1245 200L1290 240L1370 235L1450 180L1570 148M0 110L70 130L150 175L200 220L260 270L350 310L460 330L540 340L620 370L760 420L850 425L960 400L1130 350M100 60L130 90L220 150L280 220L370 280L480 330L560 330L590 305L650 230L700 235L750 275L785 285L780 340L760 390L800 420M600 370L670 305L720 320L735 410L800 450M1180 470L1250 500L1350 540L1420 510L1490 570L1495 610M1480 1010L1570 1048M360 0L370 40L430 70L500 35L580 25L680 50L800 70L860 35L950 50L990 70L1000 130L1040 160L1100 150L1150 90L1190 85L1240 100L1260 170L1310 195L1370 185L1430 130L1570 103"/>
                    <path d="M1240 370L1270 450L1350 470M1300 1500L1330 1550"/>
                </g>
                <path class="rc" d="M1150 975L1110 925L1108 890L1165 770L1190 680L1240 610L1340 568H1380L1465 582L1425 740L1535 860L1585 925M1000 1165L980 1210L900 1330M1165 1300L1130 1245L1105 1285L1060 1350L1030 1370L1010 1400M1340 1495L1400 1530L1585 1560"/>
                <path class="rf" d="M1150 975L1110 925L1108 890L1165 770L1190 680L1240 610L1340 568H1380L1465 582L1425 740L1535 860L1585 925M1000 1165L980 1210L900 1330M1165 1300L1130 1245L1105 1285L1060 1350L1030 1370L1010 1400M1340 1495L1400 1530L1585 1560"/>
                <path d="M-100 1550L130 1530L350 1512L640 1507L830 1514L1060 1533L1200 1545L1300 1560V1580H-100z" fill="#f8d49b" stroke="#e2a872" stroke-width="3"/>
            </g>

            <!-- highways -->
            <path class="yc" d="M1060 1290L1131 1333L1196 1368Q1210 1378 1211 1395T1203 1438L1180 1478M1060 1678L1135 1654Q1160 1645 1164 1626V1600M1060 1932L1096 1914L1207 1812L1265 1761L1370 1621L1414 1586L1448 1575L1467 1571.500L1513 1572.500L1546 1583L1609 1616L1636 1636L1678 1680L1708 1703L1726 1714L1928 1796L2008 1845Q2022 1853 2032 1857L2064 1835M2100 1792L2180 1830"/>
            <path class="yf" d="M1060 1290L1131 1333L1196 1368Q1210 1378 1211 1395T1203 1438L1180 1478M1060 1678L1135 1654Q1160 1645 1164 1626V1600M1060 1932L1096 1914L1207 1812L1265 1761L1370 1621L1414 1586L1448 1575L1467 1571.500L1513 1572.500L1546 1583L1609 1616L1636 1636L1678 1680L1708 1703L1726 1714L1928 1796L2008 1845Q2022 1853 2032 1857L2064 1835M2100 1792L2180 1830"/>

            <text x="1571" y="2009" font-size="27" font-weight="700" fill="#5a4030" stroke="#fff" stroke-width="5" paint-order="stroke">고개넘</text>

            <!-- recorded track -->
            <g transform="translate(1081 500) scale(.38265 .5102)">
                <g class="tb">
                    <path d="M190 768L262 774L320 738L400 698L470 677L545 662M520 668L570 700L610 755L683 835L752 860L825 848L905 890L950 925V1015M885 1000L855 1035L850 1215L814 1268L850 1275L1040 1305L1010 1360L982 1400L988 1450L1030 1496"/>
                    <path d="M190 770L255 782L305 757L345 718L400 685L475 662L545 657L560 605L535 552L450 530L378 508L335 468L350 420L377 378L379 220L381 160L430 112L445 120L487 145V200L521 250L517 295L502 340L540 382L612 370L680 400L718 450L780 475L855 490L908 530L932 580L870 603L840 650L800 745L817 798L860 850L955 915L962 970L948 1028L885 1003L855 1060L845 1190L836 1285L978 1300L1040 1308L1015 1360L975 1405V1462L1030 1490L1140 1520L1200 1624L1232 1655L1310 1684L1380 1720L1425 1757L1475 1807L1530 1842L1568 1877"/>
                    <path transform="translate(-5 5)" d="M1030 1490L1140 1520L1200 1624L1232 1655L1310 1684L1380 1720L1425 1757L1475 1807L1530 1842L1568 1890"/>
                </g>
            </g>
            <g transform="translate(1600 1350) scale(.3584 .41454)">
                <g class="tb">
                    <path d="M-30 28L30 62L85 115L120 165L185 215L235 275L270 310L340 355L405 390L480 402L560 420L660 435L715 460L765 493L840 503L920 508L1000 532L1060 575L1130 610L1160 660L1180 650"/>
                    <path transform="translate(-5 6)" d="M-30 28L30 62L85 115L120 165L180 215L212 275L270 320L340 363L405 393L480 402L560 420L660 441L715 470L765 506L840 512L920 516L1000 536L1060 575L1130 608L1160 645"/>
                </g>
                <path class="tg" d="M-30 28L30 62L85 115L120 165L185 215L235 275L270 310L340 355L405 390L480 402L560 420L660 435L715 460L765 493L840 503L920 508L1000 532L1060 575L1130 610L1160 660L1180 650"/>
            </g>
            <g transform="translate(1081 500) scale(.38265 .5102)">
                <path class="tg" d="M535 672L570 700L610 755L683 835L752 860L825 848L860 860"/>
                <path class="tg" d="M190 770L255 782L305 757L345 718L400 685L475 662L545 657L560 605L535 552L450 530L378 508L335 468L350 420L377 378L379 220L381 160L430 112L445 120L487 145V200L521 250L517 295L502 340L540 382L612 370L680 400L718 450L780 475L855 490L908 530L932 580L870 603L840 650L800 745L817 798L860 850L955 915L962 970L948 1028L885 1003L855 1060L845 1190L836 1285L978 1300L1040 1308L1015 1360L975 1405V1462L1030 1490L1140 1520L1200 1624L1232 1655L1310 1684L1380 1720L1425 1757L1475 1807L1530 1842L1568 1877"/>
                <g stroke="#e8f4ff" stroke-width="1.500">
                    <path d="M375 107L400 87L463 90L440 107z" fill="#56dcf2"/>
                    <path d="M440 107L463 90L475 135L452 153z" fill="#2470cc"/>
                    <path d="M928 1415L978 1382L984 1408L934 1446z" fill="#3fcdf0"/>
                    <path d="M978 1382L1028 1405L1034 1429L984 1408z" fill="#2470cc"/>
                </g>
            </g>

            <!-- flags -->
            <g transform="translate(1600 1350) scale(.3584 .41454)">
                <path d="M1160 352Q1170 346 1180 352L1190 360Q1290 340 1390 387T1545 408Q1470 520 1340 520Q1240 512 1182 550V600H1160z" fill="#1d5bb2" fill-opacity=".9"/>
                <path d="M1160 590q-25 10-25 35 5 10 20 5z" fill="#1d5bb2" fill-opacity=".8"/>
                <path d="M805 416Q860 440 940 398T1168 366V550Q1100 520 990 528Q860 530 805 416z" fill="#ae1a1a" fill-opacity=".88"/>
                <path d="M1168 362q11-8 22 0v238h-22z" fill="#8d1730"/>
                <path d="M1168 560h22v50h-22z" fill="#c01f2c"/>
            </g>
            <circle cx="2023" cy="1609" r="9" fill="#d5dcea" stroke="#b81d2c" stroke-width="6"/>
            <g fill="#fff" font-size="27" font-weight="500">
                <text x="1931" y="1549.500" textLength="76">도착지</text>
                <text x="2032" y="1546.500" textLength="76">출발지</text>
            </g>

            <use href="#ic-lake" x="1344.500" y="441" width="50" height="50"/>
            <text class="maplabel" x="1369.500" y="525">금광호수</text>
            <use href="#ic-lake" x="1734" y="1590" width="50" height="50"/>
            <text class="maplabel" x="1759" y="1674">금광저수지</text>

            <rect x="1079" y="188" width="1081" height="30" fill="url(#mapShade)"/>

            <!-- controls -->
            <g fill="#fff">
                <circle cx="2051.500" cy="277.500" r="63"/><circle cx="2051.500" cy="419" r="63"/>
                <circle cx="2070" cy="1771.500" r="62"/><circle cx="2070" cy="1908.500" r="62"/>
            </g>
            <g stroke="#808080" stroke-width="6" stroke-linecap="round">
                <path d="M2033 278h38M2052 258.500v39M2033 420h38"/>
            </g>
            <circle cx="2070" cy="1766" r="15.500" fill="none" stroke="#808080" stroke-width="8.500"/>
            <path d="M2064.500 1783h11l-5.500 17z" fill="#808080"/>
            <g fill="none" stroke="#808080" stroke-width="5">
                <path d="M2045 1902l-13 7 39 22 38-22-13-7M2045 1916l-13 7 39 22 38-22-13-7"/>
            </g>
            <path d="M2071 1871l44.500 25-44.500 25-44.500-25z" fill="#808080"/>

            <rect x="1113" y="1908" width="122" height="42" rx="21" fill="#fff" stroke="#e2e2e2" stroke-width="2.500"/>
            <text x="1128" y="1938" font-size="25.500" font-weight="900" fill="#03c73c" stroke="#03c73c" stroke-width="1.200" textLength="91" lengthAdjust="spacingAndGlyphs">NAVER</text>
            <path d="M1283 1936v8.500h173.500v-8.500" fill="none" stroke="#fff" stroke-width="6"/>
            <path d="M1283 1935v9.500h173.500v-9.500" fill="none" stroke="#444" stroke-width="2.600"/>
            <g font-size="23.500" fill="#444"><text x="1276" y="1933">0</text><text x="1423" y="1933">200m</text></g>
            <circle cx="1549.500" cy="1920" r="62" fill="#ececec" stroke="#d8d8d8" stroke-width="2"/>
            <use href="#ic-gauge" x="1503.500" y="1874" width="92" height="92" color="#23446c"/>
            <circle cx="1688" cy="1920" r="62" fill="#ececec" stroke="#d8d8d8" stroke-width="2"/>
            <path d="M1648 1940L1712 1894h17l-28 21v26h22v10h-75zM1666 1941h28v-21z" fill="#5f4b3d" fill-rule="evenodd"/>
            <path d="M1653 1912l4 7M1661 1906l5 9M1669 1900l8 11" stroke="#5f4b3d" stroke-width="4.500"/>
            <path d="M1675 1898l20-11-4-8 17 1-2 17-5-4-20 12z" fill="#5f4b3d"/>
        </svg>
        <div class="infobar">
            <div class="inforow d-flex align-items-center">
                <svg width="45" height="45"><use href="#ic-route"/></svg><span class="name">전체거리</span><span class="orange">4.52km</span>
            </div>
            <div class="inforow d-flex align-items-center">
                <svg width="45" height="45"><use href="#ic-clock"/></svg><span class="name">예상시간</span><span class="orange">1시간 8분</span>
            </div>
        </div>
    </div>

    <!-- slide handle between the two screens -->
    <svg class="handle" width="214" height="202" viewBox="975 1438 214 202">
        <defs><clipPath id="hclip"><rect x="978" y="1445" width="204" height="186" rx="72"/></clipPath></defs>
        <rect x="979" y="1447" width="205" height="188" rx="74" fill="#000" fill-opacity=".1"/>
        <rect x="977" y="1444" width="206" height="188" rx="73" fill="#d2d2d2"/>
        <rect x="978.500" y="1445.500" width="203" height="185" rx="72" fill="#fff"/>
        <g clip-path="url(#hclip)">
            <path d="M977 1440h102v195H977z" fill="#f3f3ee"/>
            <path d="M977 1440h54l-27 110-18 85h-9z" fill="#bfe0bb"/>
            <path d="M1028 1440l-13 80-16 110" fill="none" stroke="#fbf3c0" stroke-width="10"/>
            <path d="M1030 1440l-18 90-22 100" fill="none" stroke="#fff" stroke-width="2"/>
            <path d="M1036 1445h18l-12 55h-14z" fill="#73d183"/>
            <path d="M1022 1510v-25h32v28M1028 1500l-10 60-25 70" fill="none" stroke="#5fcf75" stroke-width="4"/>
            <g fill="#e9e7e2" stroke="#d9d6d0"><path d="M1062 1460h14v36h-14zM1038 1560l14 3-3 28-13-3zM1062 1520h15v22h-15zM1060 1570l17 6v40l-22-8zM1030 1596l18 7-4 12-16-6z"/></g>
            <path d="M1004 1580l30 46 30-10" fill="none" stroke="#ccc" stroke-width="2"/>
            <g fill="#f6e77c" stroke="#b09c3b" stroke-width="1.500"><circle cx="1016" cy="1500" r="8"/><circle cx="1066" cy="1482" r="8"/><circle cx="1043" cy="1506" r="8"/><circle cx="1062" cy="1507" r="8"/></g>
            <g font-size="13" fill="#554a1c" text-anchor="middle"><text x="1016" y="1505">1</text><text x="1066" y="1487">5</text><text x="1043" y="1511">7</text><text x="1062" y="1512">6</text></g>
            <text x="974" y="1538" font-size="19" fill="#777">근린공원</text>
            <text x="995" y="1628" font-size="19" fill="#777">과빌딩</text>
        </g>
        <path d="M1015 1508q-8-4-9 5 0 4 3 7l26 19-27 20q-3 4-1 10 4 6 12 2l41-31z" fill="#333"/>
        <path d="M1146 1508q8-4 9 5 0 4-3 7l-26 19 27 20q3 4 1 10-4 6-12 2l-43-31z" fill="#d43300"/>
    </svg>
    <div class="edge"></div>
</div>

<!-- speed / altitude screen -->
<div class="detail">
    <div class="topbar d-flex align-items-center">
        <svg width="71" height="50"><use href="#ic-back"/></svg>
        <span class="title-text">속도/고도 상세정보</span>
        <button class="btn-menu ms-auto">메뉴</button>
    </div>
    <div class="bar-line"></div>
    <div class="chart-area">
        <div class="chart-shadow"></div>
        <svg class="ns" width="2157" height="850" viewBox="5 2279 2157 850">
            <defs>
                <linearGradient id="alt" gradientUnits="userSpaceOnUse" x1="0" y1="1048" x2="0" y2="1336">
                    <stop offset="0" stop-color="#fff022"/><stop offset=".5" stop-color="#fdbd3e"/><stop offset="1" stop-color="#ff875c"/>
                </linearGradient>
            </defs>
            <g transform="translate(0 2160) scale(.6894 .6563)">
                <path d="M124 1337V1139L130 1139L136 1135L280 1135L300 1136L415 1136L445 1135L700 1135L720 1136L835 1136L850 1134L910 1123L950 1110L970 1101L980 1098L1000 1085L1030 1065Q1055 1048 1085 1048H1130Q1150 1053 1170 1064L1205 1082L1240 1106Q1275 1128 1300 1132L1345 1136L1410 1136L1435 1128L1455 1121L1470 1111L1500 1098Q1530 1083 1568 1083H1612L1640 1088L1735 1102L1780 1116Q1800 1127 1835 1131L1900 1136H1980L2050 1131Q2085 1127 2105 1115Q2125 1105 2150 1078T2200 1048H2232Q2247 1049 2280 1073Q2305 1100 2345 1111T2430 1131L2500 1136L2590 1135L2690 1135L2720 1136L2810 1135L2940 1136L3000 1138H3053V1337z" fill="url(#alt)"/>
                <path d="M124 1337V1139L130 1139L136 1135L280 1135L300 1136L415 1136L445 1135L700 1135L720 1136L835 1136L850 1134L910 1123L950 1110L970 1101L980 1098L1000 1085L1030 1065Q1055 1048 1085 1048H1130Q1150 1053 1170 1064L1205 1082L1240 1106Q1275 1128 1300 1132L1345 1136L1410 1136L1435 1128L1455 1121L1470 1111L1500 1098Q1530 1083 1568 1083H1612L1640 1088L1735 1102L1780 1116Q1800 1127 1835 1131L1900 1136H1980L2050 1131Q2085 1127 2105 1115Q2125 1105 2150 1078T2200 1048H2232Q2247 1049 2280 1073Q2305 1100 2345 1111T2430 1131L2500 1136L2590 1135L2690 1135L2720 1136L2810 1135L2940 1136L3000 1138H3053" fill="none" stroke="#111" stroke-width="2"/>
                <path d="M124 1337H130L138 1300L150 1262L157 1252L167 1230L198 1168L212 1155L225 1137L235 1125L250 1104L270 1080L279 1081L300 1065L308 1055L320 1047L362 1013L372 1009L382 1002L392 998L400 992L410 990L424 982L432 884L440 906L447 892L455 861L465 858L475 850L486 848L493 842L503 841L515 828L525 821L533 819L549 824L557 817L572 817L580 800H588L594 797L600 801L622 793L629 795L635 816L646 815L655 823L661 831H668L685 826L697 832L705 823H728L737 751L744 753L751 784H759L774 838L781 834L789 841L796 831L803 834L812 870L818 875L833 879L841 875L855 888L868 895L878 896L886 894L895 898L912 901L922 909H929L936 898L944 907L955 914L964 916L972 924L985 928L996 940L1003 938L1018 946L1025 955L1032 974L1040 976L1047 966L1060 960L1071 938L1078 940L1085 938L1093 946L1104 943L1112 912L1118 905L1130 901L1141 900L1148 888L1156 906L1163 905L1178 906L1193 920H1206L1221 933L1229 951H1238L1257 943L1263 948L1270 949L1277 955L1283 952L1291 955L1300 988H1318L1335 965L1338 1002L1353 1001L1359 997L1366 1002L1380 1003L1388 1001L1404 1005L1411 1009L1418 1018L1425 1017L1440 1026L1447 1028L1455 1024L1480 1020L1495 1013H1503L1510 1007L1518 998L1525 983L1539 976L1547 981L1555 979L1563 974L1568 966L1583 955L1590 940L1597 902L1604 893L1620 903L1632 900L1641 829L1650 824L1671 821L1697 811L1703 800L1711 811H1720L1733 791L1747 784L1754 770L1770 774L1778 768L1798 767L1814 762H1823L1836 792L1844 781L1852 789L1866 788L1873 797L1880 796L1889 800L1896 798L1904 802L1911 791L1919 801L1933 792L1949 798L1970 799L1985 822L1993 848H2000L2008 864L2014 861L2022 871L2030 866L2038 868L2046 877L2061 884L2075 903L2092 922Q2103 940 2118 942L2139 937L2149 927L2163 929L2177 924L2191 926L2207 920L2220 921L2248 910H2264L2271 901L2284 891L2292 868H2301L2310 838L2317 827L2325 828L2332 837L2345 820L2349 811L2361 805L2369 788L2375 779L2385 758L2392 748L2398 741L2404 725L2411 739L2420 736L2434 720L2448 723L2453 733L2461 753L2468 757L2477 765H2486L2494 774L2502 777L2510 766L2525 781L2532 780L2541 786L2555 784L2570 793L2580 798H2590L2610 811H2618L2625 801L2632 805L2640 802L2655 803L2663 810L2670 805L2678 847H2684L2692 839L2701 846L2710 825L2735 826L2752 820L2760 804L2767 801H2774L2789 797L2800 800L2819 802L2827 794L2834 801L2842 804L2880 797L2904 795L2912 792L2919 798L2926 795L2935 801L2955 809L2963 816L2969 832L2976 839L2983 908L2990 912L2999 940L3006 945L3013 963L3021 959L3035 964L3048 960L3053 962" fill="none" stroke="#4a80df" stroke-width="2.600" stroke-linejoin="round"/>
            </g>
            <g stroke="#c9c9c9" stroke-width="1.300">
                <path d="M83 2319.500h2025M83 2463.500h2025M83 2607.500h2025M83 2751.500h2025M83 2895.500h2025"/>
                <path d="M83 3039h2025M2105.500 2300v739" stroke="#ccc" stroke-width="2.600"/>
                <path d="M531.500 3029v8" stroke-width="2.600"/>
                <path d="M978 3029v9M1425.500 3029v9M1872.500 3029v9" stroke="#000" stroke-width="2.600"/>
            </g>
            <g font-size="31.500" text-anchor="end">
                <text x="80.500" y="2319">500</text><text x="80.500" y="2463">400</text><text x="80.500" y="2607">300</text>
                <text x="80.500" y="2751">200</text><text x="80.500" y="2895">100</text><text x="80.500" y="3038.500">0</text>
                <text x="2147" y="2316">10</text><text x="2147" y="3038.500">0</text>
            </g>
            <g font-size="31" text-anchor="end">
                <text x="532" y="3070">1.0km</text><text x="979" y="3070">2.0km</text><text x="1426" y="3070">3.0km</text><text x="1873" y="3070">4.0km</text>
            </g>
            <svg x="2040" y="3040" width="109" height="40"><text x="12" y="30" font-size="31">4.52km</text></svg>
            <text x="106" y="2321.500" font-size="31.200" fill="#f00">고도(m)</text>
            <text x="2085" y="2321.500" font-size="31.500" fill="#00f" text-anchor="end">속도(km/h)</text>
        </svg>
        <div class="legend d-flex">
            <svg width="70" height="70"><rect x="3.500" y="3.500" width="63" height="63" fill="#fff" stroke="#d43300" stroke-width="7"/><path d="M9 38l8-8 11 12 27-30 8 9-35 37z" fill="#d43300"/></svg>
            <span style="width:140px">고도</span>
            <svg width="70" height="70"><rect x="3.500" y="3.500" width="63" height="63" fill="#fff" stroke="#d43300" stroke-width="7"/><path d="M9 38l8-8 11 12 27-30 8 9-35 37z" fill="#d43300"/></svg>
            <span style="width:140px">속도</span>
            <svg width="70" height="70"><rect x="3.500" y="3.500" width="63" height="63" fill="#fff" stroke="#d43300" stroke-width="7"/></svg>
            <span style="color:#888;margin-left:2px">웨이포인트</span>
        </div>
    </div>
</div>

<script src="https://cdn.jsdelivr.net/npm/bootstrap@5.3.3/dist/js/bootstrap.bundle.min.js"></script>
</body>
</html>
